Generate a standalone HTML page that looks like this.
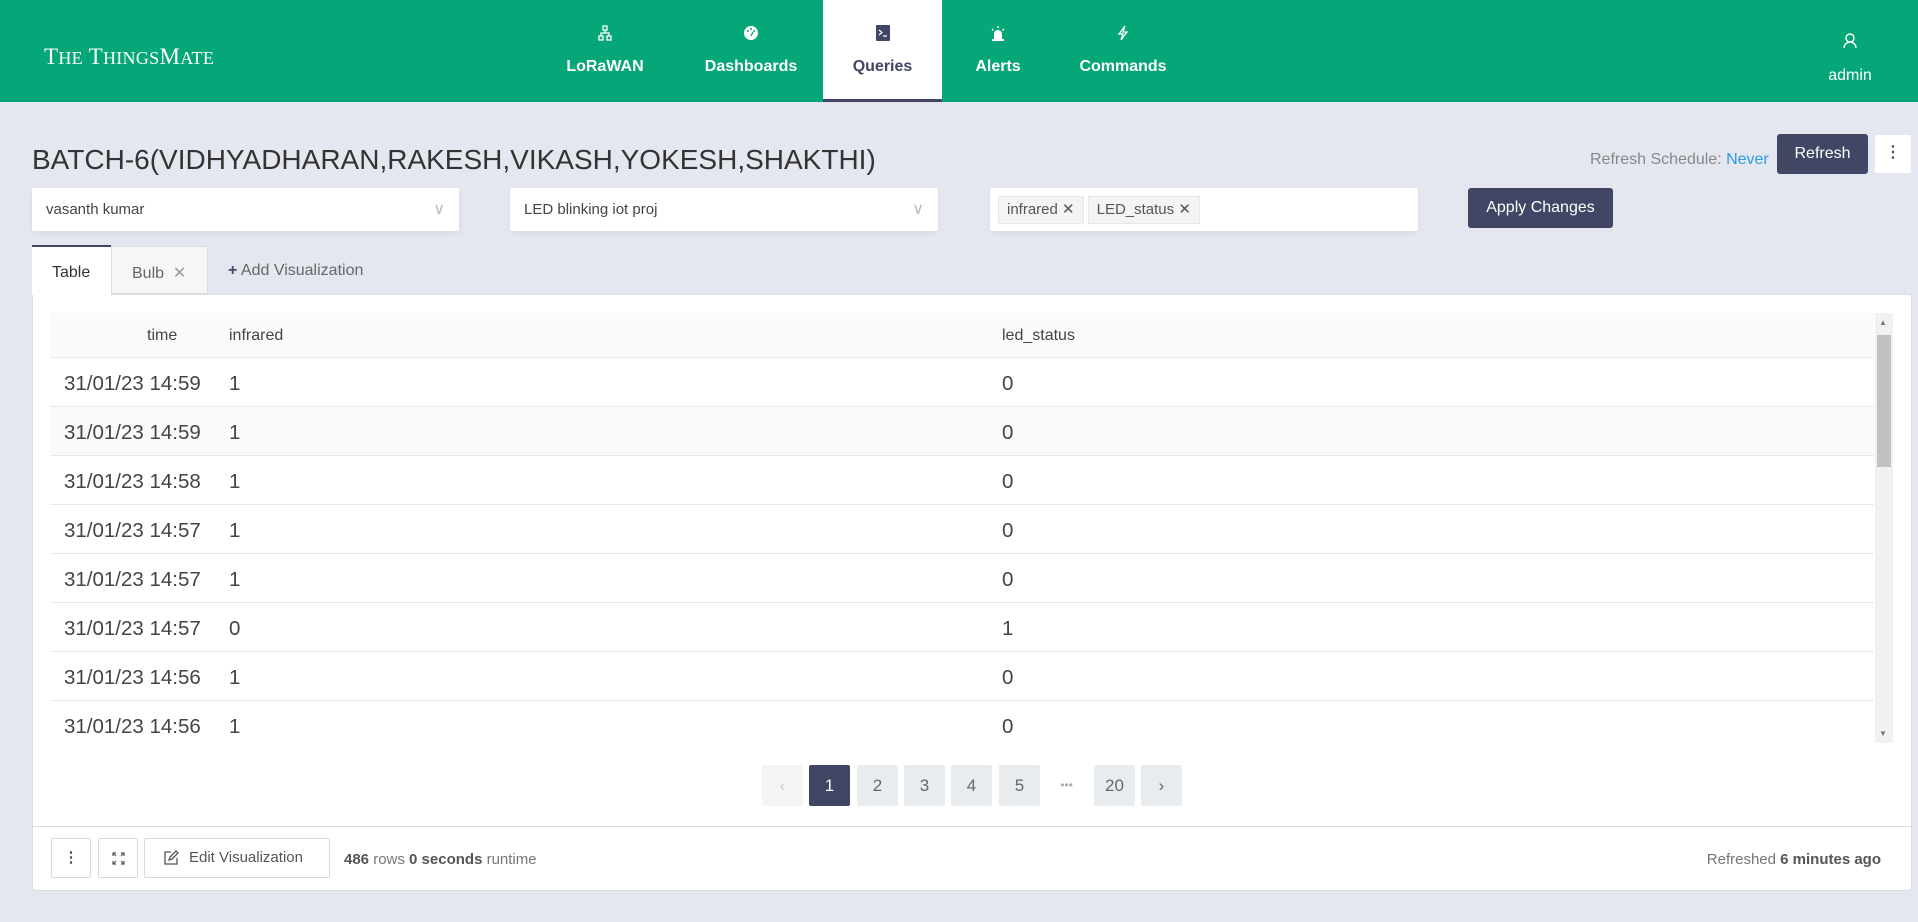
<!DOCTYPE html>
<html><head><meta charset="utf-8"><style>
*{box-sizing:border-box;margin:0;padding:0}
body{width:1918px;height:922px;background:#e4e7ef;font-family:"Liberation Sans",sans-serif;color:#333;position:relative;overflow:hidden}
.hdr{position:absolute;left:0;top:0;width:1918px;height:102px;background:#05a678}
.logo{position:absolute;left:44px;top:44px;color:#fff;font-family:"Liberation Serif",serif;font-size:23px;letter-spacing:0.3px}
.nav{position:absolute;top:0;height:102px;text-align:center;color:#fff;font-weight:bold;font-size:16px}
.nav .ic{position:absolute;top:25px;left:50%;transform:translateX(-50%)}
.nav .t{position:absolute;top:58px;left:0;right:0}
.abs{position:absolute}
.sel{position:absolute;top:188px;height:43px;background:#fff;border-radius:2px;box-shadow:0 2px 6px rgba(0,0,0,.06);font-size:15px;color:#444;padding:13px 14px}
.sel .ch{position:absolute;right:14px;top:11px;color:#bbb;font-size:16px}
.btn{position:absolute;background:#404663;color:#fff;border-radius:3px;font-size:16px;text-align:center}
.tag{display:inline-block;background:#f4f4f4;border:1px solid #e8e8e8;padding:2px 8px;margin-right:4px;font-size:15px;color:#555;line-height:22px}
.panel{position:absolute;left:32px;top:294px;width:1880px;height:597px;background:#fff;border:1px solid #ddd;border-radius:0 0 3px 3px}
.row{position:absolute;left:50px;width:1824px;height:49px;border-bottom:1px solid #e8e8e8;font-size:20.5px;color:#444}
.row span{position:absolute;top:14px}
.pg{position:absolute;top:765px;width:41px;height:41px;background:#e8ecef;border-radius:2px;text-align:center;line-height:41px;font-size:17px;color:#666}
.fb{position:absolute;top:838px;height:40px;border:1px solid #d9d9d9;border-radius:2px;background:#fff;color:#555;font-size:15px}
</style></head><body>
<div class="hdr">
 <div class="logo">T<span style="font-size:18px">HE</span> T<span style="font-size:18px">HINGS</span>M<span style="font-size:18px">ATE</span></div>
 <div class="nav" style="left:550px;width:110px"><svg class="ic" width="14" height="16" viewBox="0 0 14 16" fill="none" stroke="#fff" stroke-width="1.3"><rect x="5" y="1" width="4" height="4"/><rect x="1" y="11" width="4" height="4"/><rect x="9" y="11" width="4" height="4"/><path d="M7 5v3M3 11V8h8v3"/></svg><div class="t">LoRaWAN</div></div>
 <div class="nav" style="left:690px;width:122px"><svg class="ic" width="16" height="16" viewBox="0 0 16 16"><circle cx="8" cy="8" r="7" fill="#fff"/><circle cx="5" cy="6" r="1" fill="#05a678"/><circle cx="8" cy="4" r="1" fill="#05a678"/><circle cx="11" cy="6" r="1" fill="#05a678"/><path d="M8 11l2-4" stroke="#05a678" stroke-width="1.3"/></svg><div class="t">Dashboards</div></div>
 <div class="nav" style="left:823px;width:119px;background:#fff;color:#404663;border-bottom:3px solid #404663"><svg class="ic" width="14" height="16" viewBox="0 0 14 16"><rect width="14" height="16" rx="1" fill="#404663"/><path d="M3 5l3 2.5L3 10M7 11h4" stroke="#fff" stroke-width="1.2" fill="none"/></svg><div class="t">Queries</div></div>
 <div class="nav" style="left:955px;width:86px"><svg class="ic" width="16" height="16" viewBox="0 0 16 16" fill="#fff"><path d="M4 14V9a4 4 0 0 1 8 0v5z"/><rect x="2" y="14" width="12" height="2"/><path d="M8 1v2M2 4l1.5 1.5M14 4l-1.5 1.5" stroke="#fff" stroke-width="1.3"/></svg><div class="t">Alerts</div></div>
 <div class="nav" style="left:1065px;width:116px"><svg class="ic" width="12" height="16" viewBox="0 0 12 16" fill="none" stroke="#fff" stroke-width="1.3"><path d="M8 1L2 9h4l-2 6 6-8H6z"/></svg><div class="t">Commands</div></div>
 <div class="nav" style="left:1810px;width:80px;font-weight:normal"><svg class="ic" style="top:33px" width="14" height="16" viewBox="0 0 14 16" fill="none" stroke="#fff" stroke-width="1.4"><circle cx="7" cy="5" r="4"/><path d="M1 15a6 6 0 0 1 12 0"/></svg><div class="t" style="top:67px">admin</div></div>
</div>
<div class="abs" style="left:32px;top:144px;font-size:28px;color:#333">BATCH-6(VIDHYADHARAN,RAKESH,VIKASH,YOKESH,SHAKTHI)</div>
<div class="abs" style="left:1590px;top:151px;font-size:16px;color:#888">Refresh Schedule: <span style="color:#2d9cdb">Never</span></div>
<div class="btn" style="left:1777px;top:134px;width:91px;height:40px;line-height:40px">Refresh</div>
<div class="abs" style="left:1875px;top:135px;width:36px;height:38px;background:#fff;border-radius:2px;text-align:center;line-height:36px;color:#555;font-size:16px;font-weight:bold">⋮</div>
<div class="sel" style="left:32px;width:427px">vasanth kumar<span class="ch">∨</span></div>
<div class="sel" style="left:510px;width:428px">LED blinking iot proj<span class="ch">∨</span></div>
<div class="sel" style="left:990px;width:428px;padding:8px 8px"><span class="tag">infrared ✕</span><span class="tag">LED_status ✕</span></div>
<div class="btn" style="left:1468px;top:188px;width:145px;height:40px;line-height:40px">Apply Changes</div>
<div class="abs" style="left:32px;top:245px;width:79px;height:50px;background:#fff;border-top:2px solid #404663;font-size:16px;padding:17px 0 0 20px;color:#333;z-index:2">Table</div>
<div class="abs" style="left:111px;top:246px;width:97px;height:48px;background:#f6f6f7;border:1px solid #ddd;font-size:16px;padding:16px 0 0 20px;color:#666">Bulb &nbsp;<span style="color:#999">✕</span></div>
<div class="abs" style="left:228px;top:262px;font-size:16px;color:#666"><b style="color:#404663">+</b> Add Visualization</div>
<div class="panel"></div>
<div class="abs" style="left:50px;top:313px;width:1824px;height:45px;background:#fafafa;border-bottom:1px solid #e8e8e8;font-size:16px;color:#444">
 <span class="abs" style="left:97px;top:14px">time</span><span class="abs" style="left:179px;top:14px">infrared</span><span class="abs" style="left:952px;top:14px">led_status</span></div>
<div class="row" style="top:358px"><span style="left:14px">31/01/23 14:59</span><span style="left:179px">1</span><span style="left:952px">0</span></div>
<div class="row" style="top:407px;background:#fafafa"><span style="left:14px">31/01/23 14:59</span><span style="left:179px">1</span><span style="left:952px">0</span></div>
<div class="row" style="top:456px"><span style="left:14px">31/01/23 14:58</span><span style="left:179px">1</span><span style="left:952px">0</span></div>
<div class="row" style="top:505px"><span style="left:14px">31/01/23 14:57</span><span style="left:179px">1</span><span style="left:952px">0</span></div>
<div class="row" style="top:554px"><span style="left:14px">31/01/23 14:57</span><span style="left:179px">1</span><span style="left:952px">0</span></div>
<div class="row" style="top:603px"><span style="left:14px">31/01/23 14:57</span><span style="left:179px">0</span><span style="left:952px">1</span></div>
<div class="row" style="top:652px"><span style="left:14px">31/01/23 14:56</span><span style="left:179px">1</span><span style="left:952px">0</span></div>
<div class="row" style="top:701px;border:none"><span style="left:14px">31/01/23 14:56</span><span style="left:179px">1</span><span style="left:952px">0</span></div>
<div class="abs" style="left:1875px;top:313px;width:18px;height:430px;background:#f1f1f1"></div>
<div class="abs" style="left:1877px;top:335px;width:14px;height:132px;background:#c1c1c1"></div>
<div class="abs" style="left:1879px;top:318px;font-size:8px;color:#777">▲</div>
<div class="abs" style="left:1879px;top:729px;font-size:8px;color:#777">▼</div>
<div class="pg" style="left:762px;background:#f3f4f6;color:#ccc">‹</div>
<div class="pg" style="left:809px;background:#404663;color:#fff">1</div>
<div class="pg" style="left:857px">2</div>
<div class="pg" style="left:904px">3</div>
<div class="pg" style="left:951px">4</div>
<div class="pg" style="left:999px">5</div>
<div class="pg" style="left:1046px;background:none;color:#aaa;font-size:12px">•••</div>
<div class="pg" style="left:1094px">20</div>
<div class="pg" style="left:1141px">›</div>
<div class="abs" style="left:33px;top:826px;width:1878px;border-top:1px solid #ddd"></div>
<div class="fb" style="left:51px;width:40px;text-align:center;line-height:38px;font-weight:bold">⋮</div>
<div class="fb" style="left:98px;width:40px"><svg style="position:absolute;left:13px;top:13px" width="13" height="13" viewBox="0 0 13 13" fill="none" stroke="#555" stroke-width="1.2"><path d="M1 4V1h3M9 1h3v3M12 9v3H9M4 12H1V9M1 1l3 3M12 1L9 4M12 12L9 9M1 12l3-3"/></svg></div>
<div class="fb" style="left:144px;width:186px;padding:10px 0 0 44px"><svg style="position:absolute;left:18px;top:11px" width="16" height="16" viewBox="0 0 16 16" fill="none" stroke="#555" stroke-width="1.3"><path d="M8 2H2v12h12V8M6 10l1-3 6-6 2 2-6 6z"/></svg>Edit Visualization</div>
<div class="abs" style="left:344px;top:851px;font-size:15px;color:#777"><b style="color:#555">486</b> rows <b style="color:#555">0 seconds</b> runtime</div>
<div class="abs" style="right:37px;top:851px;font-size:15px;color:#777">Refreshed <b style="color:#555">6 minutes ago</b></div>
</body></html>
